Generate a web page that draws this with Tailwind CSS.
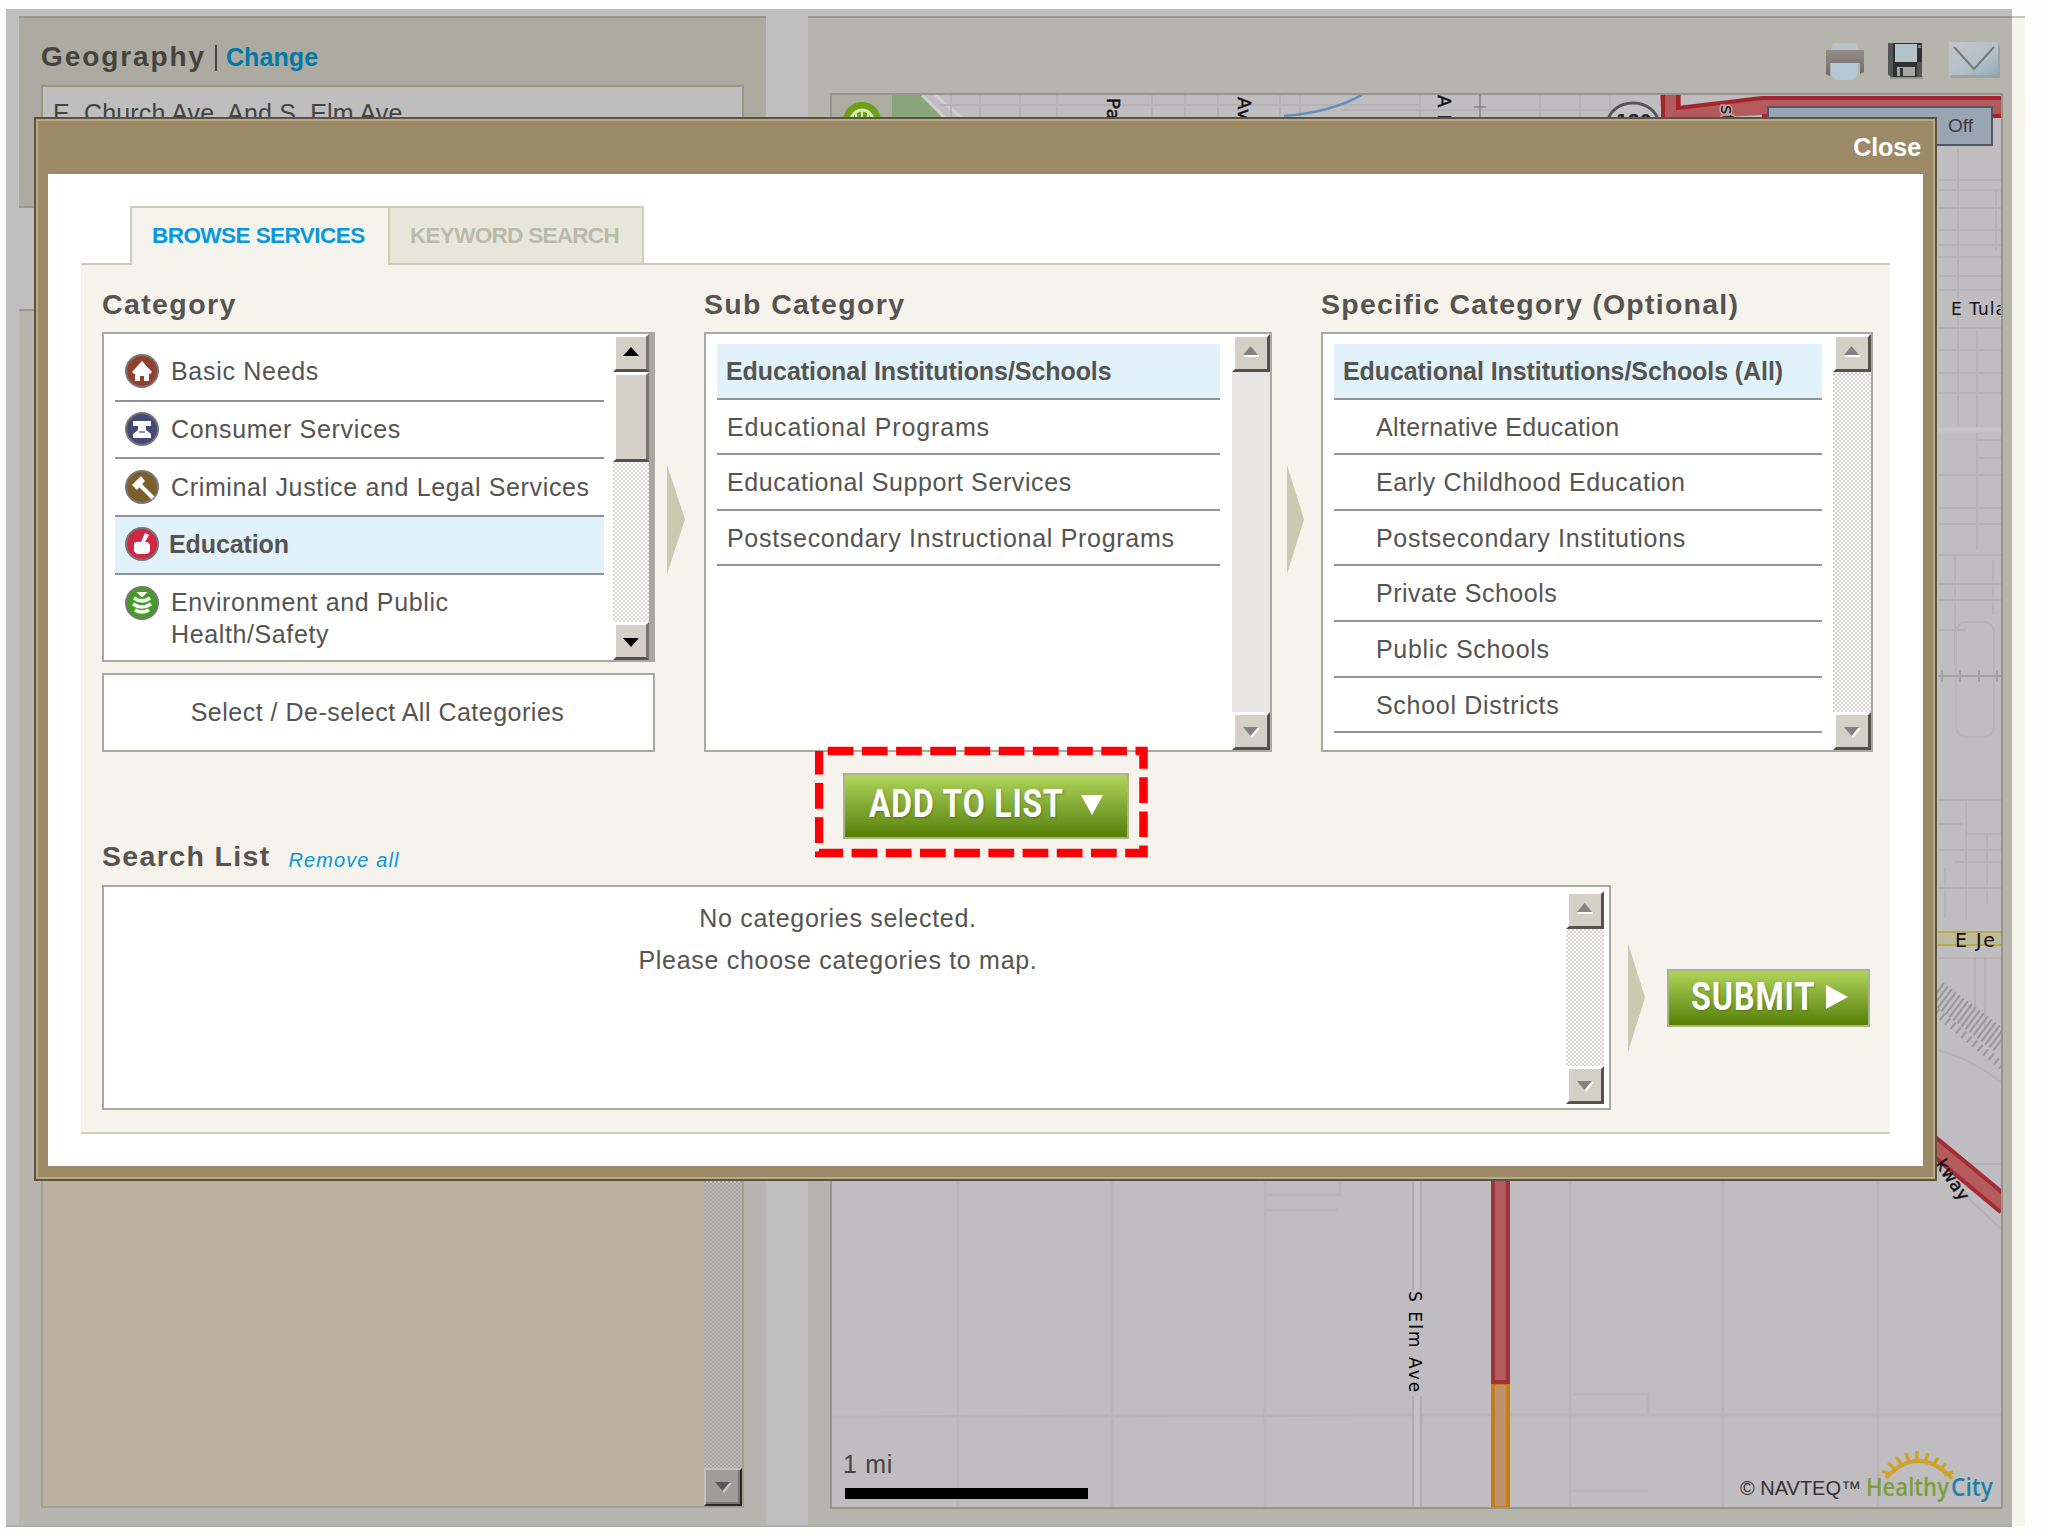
<!DOCTYPE html>
<html lang="en">
<head>
<meta charset="UTF-8">
<title>HealthyCity - Browse Services</title>
<script src="https://cdn.jsdelivr.net/npm/@tailwindcss/browser@4"></script>
</head>
<body class="relative w-[2048px] h-[1536px] overflow-hidden bg-[#fefefe] font-['Liberation_Sans',Arial,sans-serif] text-[25px] tracking-[0.7px] text-[#555450]">

<!-- Dimmed page -->
<div class="flex pt-[9px] pl-[6px]">
    <div class="flex w-[2006px] h-[1518px] bg-[#bebfbe] border-b-2 border-[#aeaeae] pt-[7px] pl-[13px]">
        <!-- Left column -->
        <div class="w-[747px] flex flex-col">
            <div class="h-[192px] bg-[#adaba1] border-y-2 border-[#97978a] px-[22px]">
                <h2 class="h-[67px] pt-[23px] leading-[32px] text-[28px] font-bold tracking-[1.9px] text-[#45433e] whitespace-nowrap">Geography<span class="inline-block w-[2px] h-[26px] bg-[#45433e] mx-[9px] -mb-[5px]"></span><span class="text-[25px] tracking-[0.1px] text-[#0079a8]">Change</span></h2>
                <div class="h-[100px] border-2 border-[#979786] bg-[#bdbebd] pl-[10px] pt-[11px] leading-[30px] tracking-[0.15px] text-[#444]">E. Church Ave. And S. Elm Ave.</div>
            </div>
            <div class="mt-[101px] h-[1217px] bg-[#b6b5af] border-t-2 border-[#97978a] px-[22px] pt-[20px] pb-[17px]">
                <div class="h-full border-2 border-[#a19e92] bg-[#bab29f] flex justify-end">
                    <div class="w-[38px] flex flex-col justify-end bg-[repeating-conic-gradient(#c2bfbc_0_25%,#a29e9d_0_50%)] bg-[length:4px_4px]">
                        <div class="size-[38px] bg-[#a09d99] border-2 border-t-[#c0c0c0] border-l-[#c0c0c0] border-b-[#2c2727] border-r-[#2c2727] shadow-[inset_-2px_-2px_0_#777] flex items-center justify-center">
                            <svg class="w-[18px] h-[12px]" viewBox="0 0 18 12"><path d="M3 2h15l-8 10z" fill="#c8c8c8"/><path d="M1 1h15l-7.500 9z" fill="#5b5957"/></svg>
                        </div>
                    </div>
                </div>
            </div>
        </div>

        <!-- Map column -->
        <div class="ml-[42px] w-[1204px] bg-[#b5b5ae] border-t-2 border-[#97978f] pl-[22px] pr-[9px] flex flex-col">
            <div class="h-[75px] pt-[22px] pr-[3px] flex justify-end items-start gap-[22px]">
                <svg class="-mr-[2px] w-[44px] h-[44px]" viewBox="0 0 44 44">
                    <defs><linearGradient id="pr" x1="0" y1="0" x2="0" y2="1"><stop offset="0" stop-color="#958c88"/><stop offset="1" stop-color="#6c6969"/></linearGradient></defs>
                    <path d="M10 3h24l2 8H8z" fill="#b5c4cb"/>
                    <path d="M3 10h38v22l-4 2V23H7v13l-4-2z" fill="url(#pr)"/>
                    <path d="M8 23h27v12l-6 5H13l-5-5z" fill="#b3c8d4"/>
                </svg>
                <svg class="mr-[3px] w-[36px] h-[40px]" viewBox="0 0 36 40">
                    <path d="M3 36h33v3H3z" fill="#96968f"/>
                    <path d="M1 3h34v34H4l-3-3z" fill="#2f3030"/><path d="M1 3h5v34H4l-3-3z" fill="#545656"/><path d="M30 22h5v15h-5z" fill="#555"/>
                    <path d="M8 4h22v18H8z" fill="#b2c4ca"/><path d="M10 27h18v9H10z" fill="#a6a6a4"/><path d="M13 28h3v8h-3z" fill="#333"/>
                    <path d="M31 5h3v3h-3z" fill="#8a8a8a"/>
                </svg>
                <svg class="w-[52px] h-[38px]" viewBox="0 0 52 38">
                    <defs><linearGradient id="ml" x1="0" y1="0" x2="1" y2="1"><stop offset="0" stop-color="#c3c7c8"/><stop offset=".6" stop-color="#b3c0c8"/><stop offset="1" stop-color="#8faabd"/></linearGradient></defs>
                    <path d="M3 5h49v33H3z" fill="#a0a29d"/><path d="M1 2h49v33H1z" fill="url(#ml)"/>
                    <path d="M6 7l20 22L46 7" fill="none" stroke="#75797c" stroke-width="2"/>
                </svg>
            </div>
            <div class="h-[1416px] border-2 border-[#96958a]">
                <svg class="block w-full h-full" viewBox="832 95 1169 1412" preserveAspectRatio="none">
                    <rect x="832" y="95" width="1170" height="1412" fill="#bfbdbf"/>
                    <!-- top strip -->
                    <path d="M832 95h60v30h-60z" fill="#acaca0"/>
                    <path d="M892 95h31l26 30h-57z" fill="#88a67a"/>
                    <path d="M922 95l24 24M935 95l28 24" stroke="#d1cfd1" stroke-width="3"/>
                    <path d="M951 95v25M980 95v25M1020 95v25M1057 95v25M1152 95v25M1185 95v25M1218 95v25M1280 95v25M1300 95v25M1420 95v25M1540 95v25M1580 95v25M1610 95v25M940 105h480M1340 110h300" stroke="#b4b2b4" stroke-width="2" fill="none"/>
                    <path d="M1480 95v25M1474 107h12" stroke="#949394" stroke-width="2"/>
                    <path d="M1284 116q50 -4 79-22" fill="none" stroke="#5f8fba" stroke-width="2.500"/>
                    <circle cx="862" cy="121" r="19" fill="#6da015"/><circle cx="862" cy="121" r="11" fill="none" stroke="#d5e6b8" stroke-width="3"/><path d="M862 110v12M856 113v8M868 113v8" stroke="#d5e6b8" stroke-width="2"/>
                    <g font-family="DejaVu Sans" font-size="18" fill="#111">
                        <text transform="translate(1107 98) rotate(90)" stroke="#111" stroke-width=".5">Pa</text>
                        <text transform="translate(1238 97) rotate(90)" stroke="#111" stroke-width=".5">Av</text>
                        <text transform="translate(1438 95) rotate(90)" stroke="#111" stroke-width=".5">A I</text>
                    </g>
                    <ellipse cx="1633" cy="123" rx="25" ry="20" fill="#c5c3c5" stroke="#555" stroke-width="3"/>
                    <text x="1616" y="127" font-family="DejaVu Sans" font-weight="bold" font-size="17" fill="#222" letter-spacing="0">180</text>
                    <path d="M1660 95h21v13l90-12h231v19h-240l-100 5z" fill="#b45a5c"/>
                    <path d="M1663 95v24M1678 95v13l84-10h240M1762 116h240" fill="none" stroke="#a3232f" stroke-width="4"/>
                    <text transform="translate(1721 105) rotate(90)" font-family="DejaVu Sans" font-size="18" fill="#111" stroke="#c5a0a0" stroke-width="3" paint-order="stroke" letter-spacing="0">st</text>
                    <!-- right strip -->
                    <path d="M1938 180h64M1938 190h64M1938 208h64M1938 230h64M1938 245h64M1938 257h64M1938 276h64M1938 290h64M1938 328h64M1938 350h64M1938 373h64M1938 393h64M1978 440h24M1978 458h24M1938 475h64M1938 508h64M1938 524h64M1938 555h64M1938 584h64M1938 600h64M1938 630h28M1958 150v275M1977 330v220M1996 190v60M1955 555v110M1993 560v55M1938 800h64M1938 824h24M1965 834h37M1938 850h64M1955 862h47M1938 888h64M1966 800v120M1987 834v70M1945 868v50M1938 958h64M1975 958v50M1985 958v70" stroke="#b3b2b4" stroke-width="2" fill="none"/>
                    <path d="M1938 430h64" stroke="#c6c5c6" stroke-width="5"/>
                    <rect x="1956" y="622" width="38" height="115" rx="10" fill="none" stroke="#b6b5b7" stroke-width="2"/>
                    <path d="M1938 676h64M1942 670v12M1960 670v12M1979 670v12M1997 670v12" stroke="#a3a2a3" stroke-width="2"/>
                    <text x="1951" y="315" font-family="DejaVu Sans" font-size="17" fill="#111" letter-spacing="1">E Tula</text>
                    <path d="M1938 932h64v13h-64z" fill="#bdbb9a"/><path d="M1938 932h64M1938 945h64" stroke="#b5ab4c" stroke-width="2"/>
                    <text x="1955" y="947" font-family="DejaVu Sans" font-size="19" fill="#111" letter-spacing="1.500">E Je</text>
                    <path d="M1936 992l66 50" stroke="#979698" stroke-width="24" stroke-dasharray="2 3"/>
                    <path d="M1936 1012l66 54" stroke="#979698" stroke-width="8" stroke-dasharray="2 5"/>
                    <path d="M1938 1050q40 12 66 35M1938 1164h64M1960 1190l42 40" stroke="#b3b2b4" stroke-width="2" fill="none"/>
                    <path d="M1930 1143l76 63" stroke="#a52b35" stroke-width="20"/><path d="M1930 1143l76 63" stroke="#b45c5d" stroke-width="12"/>
                    <text transform="translate(1935 1164) rotate(56)" font-family="DejaVu Sans" font-size="17" fill="#111" stroke="#111" stroke-width=".5" letter-spacing="0.5">kway</text>
                    <!-- bottom streets -->
                    <path d="M958 1180v328M1112 1180v328M1265 1180v328M1570 1180v328M1723 1180v328M1878 1180v328M832 1417l580-2h590M1265 1195h75v-14M1265 1210h72M1573 1394h75v20M1573 1491h75" fill="none" stroke="#b8b6b9" stroke-width="3"/>
                    <path d="M1413 1180v328M1421 1180v328" stroke="#b0aeb0" stroke-width="2"/><path d="M1417 1180v328" stroke="#c5c3c5" stroke-width="5"/>
                    <path d="M1417 1290v106" stroke="#bfbdbf" stroke-width="12"/>
                    <path d="M1493 1383h15v125h-15z" fill="#bd9270" stroke="#c67d18" stroke-width="4"/>
                    <path d="M1493 1170h15v212h-15z" fill="#b25a60" stroke="#a3323c" stroke-width="4"/>
                    <text transform="translate(1409 1291) rotate(90)" font-family="DejaVu Sans" font-size="17" fill="#000" textLength="102">S Elm Ave</text>
                    <!-- scale -->
                    <text x="843" y="1473" font-size="25" fill="#444" textLength="50">1 mi</text>
                    <path d="M845 1488h243v11h-243z" fill="#000"/>
                    <text x="1740" y="1495" font-size="20" fill="#333" letter-spacing="0" textLength="121" lengthAdjust="spacingAndGlyphs">© NAVTEQ™</text>
                    <g fill="none" stroke="#cfa32a"><path d="M1886 1478q31-34 66 0" stroke-width="4"/>
                    <path d="M1882 1471l9 4M1888 1463l8 7M1896 1457l6 8M1906 1453l3 9M1917 1451v9M1928 1453l-3 9M1938 1458l-5 7M1946 1464l-7 6M1953 1472l-9 3" stroke-width="3.500"/></g>
                    <text x="1866" y="1496" font-family="Open Sans" font-weight="600" font-size="25" letter-spacing="0" fill="#7c9f3c" textLength="83" lengthAdjust="spacingAndGlyphs">Healthy</text>
                    <text x="1951" y="1496" font-family="Open Sans" font-weight="600" font-size="25" letter-spacing="0" fill="#237fa5" textLength="42" lengthAdjust="spacingAndGlyphs">City</text>
                </svg>
            </div>
        </div>
    </div>
    <div class="mt-[7px] w-[13px] h-[1510px] bg-[#f5f5ee] border-t-2 border-[#c5c5bc]"></div>
</div>

<!-- Map toggle -->
<div class="absolute left-[1767px] top-[106px] w-[226px] h-[40px] bg-[#9aa5b4] border-2 border-[#525761] flex items-center justify-end pr-[18px] text-[19px] tracking-[0px] text-[#3c3c3c]">Off</div>

<!-- Services modal -->
<div class="absolute left-[34px] top-[117px] w-[1903px] h-[1064px] bg-[#9c8a66] border-2 border-[#5c523f] flex flex-col px-[12px] pb-[13px] shadow-[inset_0_0_0_2px_#b8ab8c]">
    <div class="h-[55px] shrink-0 flex items-center justify-end pt-[2px] pr-[2px] font-bold tracking-[-0.05px] text-white">Close</div>
    <div class="flex-1 bg-white pt-[32px] pl-[33px]">
        <div class="flex pl-[49px] text-[22.5px] font-bold">
            <div class="relative w-[260px] h-[59px] -mb-[2px] bg-[#f5f3eb] border-2 border-b-0 border-[#cdceb6] pl-[20px] leading-[56px] tracking-[-0.55px] text-[#0898dc]">BROWSE SERVICES</div>
            <div class="w-[254px] h-[57px] bg-[#e6e7d9] border-t-2 border-r-2 border-[#cdceb6] pl-[20px] leading-[56px] tracking-[-0.7px] text-[#b9bbaa]">KEYWORD SEARCH</div>
        </div>
        <div class="w-[1809px] h-[871px] bg-[#f5f3eb] border-t-2 border-b-2 border-t-[#c9c9bd] border-b-[#cdd0b2] pl-[21px]">
            <div class="flex">
                <!-- Category -->
                <div class="w-[553px]">
                    <h3 class="h-[67px] pt-[23px] leading-[33px] text-[28.5px] font-bold tracking-[1.4px]">Category</h3>
                    <div class="h-[330px] bg-white border-2 border-[#a9a8a1] flex justify-between overflow-hidden">
                        <ul class="ml-[11px] mt-[10px] w-[489px] leading-[32px]">
                            <li class="h-[57.7px] border-b-2 border-[#8f9395] flex items-center gap-[12px] pl-[10px] pb-[1px]">
                                <svg class="size-[34px]" viewBox="0 0 34 34"><circle cx="17" cy="17" r="16" fill="#93402f" stroke="#777" stroke-width="2"/><path d="M17 7l10 11-2 2h-1v7h-5v-5h-4v5h-5v-7H9l-2-2z" fill="#fff"/></svg>
                                Basic Needs
                            </li>
                            <li class="h-[57.7px] border-b-2 border-[#8f9395] flex items-center gap-[12px] pl-[10px] pb-[1px]">
                                <svg class="size-[34px]" viewBox="0 0 34 34"><circle cx="17" cy="17" r="16" fill="#454a75" stroke="#777" stroke-width="2"/><path d="M8 9h18v5h-5v4l5 4v4H8v-4l5-4v-4H8z" fill="#fff"/><path d="M14 20h6" stroke="#8f92ad" stroke-width="2"/></svg>
                                Consumer Services
                            </li>
                            <li class="h-[57.7px] border-b-2 border-[#8f9395] flex items-center gap-[12px] pl-[10px] pb-[1px] tracking-[0.65px] whitespace-nowrap">
                                <svg class="size-[34px]" viewBox="0 0 34 34"><circle cx="17" cy="17" r="16" fill="#7b602c" stroke="#777" stroke-width="2"/><path d="M7 15l9-9 4 5-8 9z" fill="#fff"/><path d="M15 15l13 13" stroke="#fff" stroke-width="4"/></svg>
                                Criminal Justice and Legal Services
                            </li>
                            <li class="h-[57.7px] border-b-2 border-[#8f9395] bg-[#e1f2fa] flex items-center gap-[10px] pl-[10px] pb-[1px] font-bold tracking-[-0.1px]">
                                <svg class="size-[34px]" viewBox="0 0 34 34"><circle cx="17" cy="17" r="16" fill="#cf2844" stroke="#777" stroke-width="2"/><path d="M9 16q3-2 7-1l4-9 4 2-4 7q5 0 5 4v5q-1 3-5 3h-7q-5-1-4-6z" fill="#fff"/></svg>
                                Education
                            </li>
                            <li class="pt-[11px] flex items-start gap-[12px] pl-[10px] tracking-[0.62px]">
                                <svg class="size-[34px] shrink-0" viewBox="0 0 34 34"><circle cx="17" cy="17" r="16" fill="#479c28" stroke="#777" stroke-width="2"/><path d="M14 7h6l-3 3z" fill="#fff" stroke="#fff" stroke-width="2"/><path d="M9 12q8 6 16 0M8 18q9 6 18 0M10 24q7 4 14 0" fill="none" stroke="#fff" stroke-width="3.500"/></svg>
                                <span class="w-[300px]">Environment and Public Health/Safety</span>
                            </li>
                        </ul>
                        <div class="w-[40px] border-r-[4px] border-[#a9a69f] flex flex-col bg-[repeating-conic-gradient(#fff_0_25%,#dcd9d6_0_50%)] bg-[length:4px_4px]">
                            <div class="h-[38px] bg-[#d4d0c8] border-[3px] border-t-white border-l-white border-b-[#55524e] border-r-[#77746e] flex items-center justify-center">
                                <svg class="w-[16px] h-[9px] -mt-[4px]" viewBox="0 0 16 9"><path d="M0 9h16L8 0z" fill="#000"/></svg>
                            </div>
                            <div class="h-[90px] bg-[#d4d0c8] border-[3px] border-t-white border-l-white border-b-[#55524e] border-r-[#77746e]"></div>
                            <div class="h-[38px] mt-auto bg-[#d4d0c8] border-[3px] border-t-white border-l-white border-b-[#55524e] border-r-[#77746e] flex items-center justify-center">
                                <svg class="w-[16px] h-[9px] mt-[2px]" viewBox="0 0 16 9"><path d="M0 0h16L8 9z" fill="#000"/></svg>
                            </div>
                        </div>
                    </div>
                    <div class="mt-[11px] h-[79px] bg-white border-2 border-[#a9a8a1] flex items-center justify-center pr-[2px] tracking-[0.5px]">Select / De-select All Categories</div>
                </div>
                <div class="w-[49px] pl-[12px] pt-[200px]">
                    <svg class="w-[18px] h-[109px]" viewBox="0 0 18 109"><path d="M0 0l18 54.500L0 109z" fill="#cacab0"/></svg>
                </div>
                <!-- Sub category -->
                <div class="w-[568px]">
                    <h3 class="h-[67px] pt-[23px] leading-[33px] text-[28.5px] font-bold tracking-[1.35px]">Sub Category</h3>
                    <div class="h-[420px] bg-white border-2 border-[#a9a8a1] flex justify-between">
                        <ul class="ml-[11px] mt-[10px] w-[503px] leading-[55px]">
                            <li class="h-[55.6px] border-b-2 border-[#94958f] bg-[#e1f2fa] pl-[9px] font-bold tracking-[-0.06px]">Educational Institutions/Schools</li>
                            <li class="h-[55.6px] border-b-2 border-[#94958f] pl-[10px] tracking-[0.85px]">Educational Programs</li>
                            <li class="h-[55.6px] border-b-2 border-[#94958f] pl-[10px] tracking-[0.6px]">Educational Support Services</li>
                            <li class="h-[55.6px] border-b-2 border-[#94958f] pl-[10px]">Postsecondary Instructional Programs</li>
                        </ul>
                        <div class="w-[38px] flex flex-col justify-between bg-[#e8e6e4]">
                            <div class="h-[38px] bg-[#d4d0c8] border-[3px] border-t-white border-l-white border-b-[#55524e] border-r-[#55524e] flex items-center justify-center">
                                <svg class="w-[16px] h-[11px] -mt-[3px]" viewBox="0 0 16 11"><path d="M1 9h15v2H1z" fill="#fff"/><path d="M0 9h15L7.500 0z" fill="#858280"/></svg>
                            </div>
                            <div class="h-[38px] bg-[#d4d0c8] border-[3px] border-t-white border-l-white border-b-[#55524e] border-r-[#55524e] flex items-center justify-center">
                                <svg class="w-[17px] h-[11px] mt-[3px]" viewBox="0 0 17 11"><path d="M2 1h15l-8 10z" fill="#fff"/><path d="M0 0h15L7.500 9z" fill="#858280"/></svg>
                            </div>
                        </div>
                    </div>
                </div>
                <div class="w-[49px] pl-[15px] pt-[200px]">
                    <svg class="w-[17px] h-[109px]" viewBox="0 0 18 109" preserveAspectRatio="none"><path d="M0 0l18 54.500L0 109z" fill="#cacab0"/></svg>
                </div>
                <!-- Specific category -->
                <div class="w-[552px]">
                    <h3 class="h-[67px] pt-[23px] leading-[33px] text-[28.5px] font-bold tracking-[1.25px]">Specific Category (Optional)</h3>
                    <div class="h-[420px] bg-white border-2 border-[#a9a8a1] flex justify-between">
                        <ul class="ml-[11px] mt-[10px] w-[488px] leading-[55px]">
                            <li class="h-[55.6px] border-b-2 border-[#94958f] bg-[#e1f2fa] pl-[9px] font-bold tracking-[-0.08px]">Educational Institutions/Schools (All)</li>
                            <li class="h-[55.6px] border-b-2 border-[#94958f] pl-[42px] tracking-[0.35px]">Alternative Education</li>
                            <li class="h-[55.6px] border-b-2 border-[#94958f] pl-[42px] tracking-[0.6px]">Early Childhood Education</li>
                            <li class="h-[55.6px] border-b-2 border-[#94958f] pl-[42px]">Postsecondary Institutions</li>
                            <li class="h-[55.6px] border-b-2 border-[#94958f] pl-[42px] tracking-[0.5px]">Private Schools</li>
                            <li class="h-[55.6px] border-b-2 border-[#94958f] pl-[42px]">Public Schools</li>
                            <li class="h-[55.6px] border-b-2 border-[#94958f] pl-[42px]">School Districts</li>
                        </ul>
                        <div class="w-[38px] flex flex-col justify-between bg-[repeating-conic-gradient(#fff_0_25%,#d8d4d0_0_50%)] bg-[length:4px_4px]">
                            <div class="h-[38px] bg-[#d4d0c8] border-[3px] border-t-white border-l-white border-b-[#55524e] border-r-[#55524e] flex items-center justify-center">
                                <svg class="w-[16px] h-[11px] -mt-[3px]" viewBox="0 0 16 11"><path d="M1 9h15v2H1z" fill="#fff"/><path d="M0 9h15L7.500 0z" fill="#858280"/></svg>
                            </div>
                            <div class="h-[38px] bg-[#d4d0c8] border-[3px] border-t-white border-l-white border-b-[#55524e] border-r-[#55524e] flex items-center justify-center">
                                <svg class="w-[17px] h-[11px] mt-[3px]" viewBox="0 0 17 11"><path d="M2 1h15l-8 10z" fill="#fff"/><path d="M0 0h15L7.500 9z" fill="#858280"/></svg>
                            </div>
                        </div>
                    </div>
                </div>
            </div>

            <!-- Add to list -->
            <div class="relative mt-[21px] ml-[741px] w-[286px] h-[66px]">
                <button class="w-full h-full border-2 border-[#aab28e] bg-linear-to-b from-[#b1d559] to-[#578000] flex items-center pl-[24px] pb-[3px] text-white">
                    <span class="w-[195px] whitespace-nowrap text-left font-['Roboto'] font-bold text-[39px] tracking-[1px] origin-left scale-x-[0.82] text-shadow-[1px_1px_2px_rgb(60_80_0/0.5)]">ADD TO LIST</span>
                    <svg class="ml-[17px] w-[22px] h-[20px]" viewBox="0 0 22 20"><path d="M0 0h22L11 20z" fill="#fff"/></svg>
                </button>
                <svg class="absolute -left-[28px] -top-[27px] w-[334px] h-[112px]" viewBox="815 746 334 112"><path d="M819 751H1143.500V853H819V751" fill="none" stroke="#fb0006" stroke-width="8.500" stroke-dasharray="25.700 8.500" stroke-dashoffset="-8.700"/></svg>
            </div>

            <!-- Search list -->
            <div class="h-[46px] leading-[35px] flex gap-[18px]">
                <h3 class="text-[28.5px] font-bold tracking-[1.35px]">Search List</h3>
                <a class="pt-[4px] text-[20px] italic tracking-[1.1px] text-[#0898d4]">Remove all</a>
            </div>
            <div class="flex">
                <div class="w-[1509px] h-[225px] bg-white border-2 border-[#a9a8a1] flex pt-[4px] pr-[5px] pb-[4px]">
                    <div class="flex-1 pr-[32px] pt-[6px] text-center leading-[42px]">
                        <p>No categories selected.</p>
                        <p>Please choose categories to map.</p>
                    </div>
                    <div class="w-[38px] -ml-[38px] flex flex-col justify-between bg-[repeating-conic-gradient(#fff_0_25%,#d8d4d0_0_50%)] bg-[length:4px_4px]">
                        <div class="h-[38px] bg-[#d4d0c8] border-[3px] border-t-white border-l-white border-b-[#55524e] border-r-[#55524e] flex items-center justify-center">
                            <svg class="w-[16px] h-[11px] -mt-[3px]" viewBox="0 0 16 11"><path d="M1 9h15v2H1z" fill="#fff"/><path d="M0 9h15L7.500 0z" fill="#858280"/></svg>
                        </div>
                        <div class="h-[38px] bg-[#d4d0c8] border-[3px] border-t-white border-l-white border-b-[#55524e] border-r-[#55524e] flex items-center justify-center">
                            <svg class="w-[17px] h-[11px] mt-[3px]" viewBox="0 0 17 11"><path d="M2 1h15l-8 10z" fill="#fff"/><path d="M0 0h15L7.500 9z" fill="#858280"/></svg>
                        </div>
                    </div>
                </div>
                <svg class="ml-[17px] mt-[58px] w-[17px] h-[109px]" viewBox="0 0 18 109" preserveAspectRatio="none"><path d="M0 0l18 54.500L0 109z" fill="#cacab0"/></svg>
                <button class="ml-[22px] mt-[84px] w-[203px] h-[58px] border-2 border-[#aab28e] bg-linear-to-b from-[#b1d559] to-[#578000] flex items-center pl-[22px] pb-[2px] text-white">
                    <span class="w-[126px] whitespace-nowrap text-left font-['Roboto'] font-bold text-[39px] tracking-[1px] origin-left scale-x-[0.83] text-shadow-[1px_1px_2px_rgb(60_80_0/0.5)]">SUBMIT</span>
                    <svg class="ml-[9px] w-[22px] h-[24px]" viewBox="0 0 22 24"><path d="M0 0l22 12L0 24z" fill="#fff"/></svg>
                </button>
            </div>
        </div>
    </div>
</div>
</body>
</html>
